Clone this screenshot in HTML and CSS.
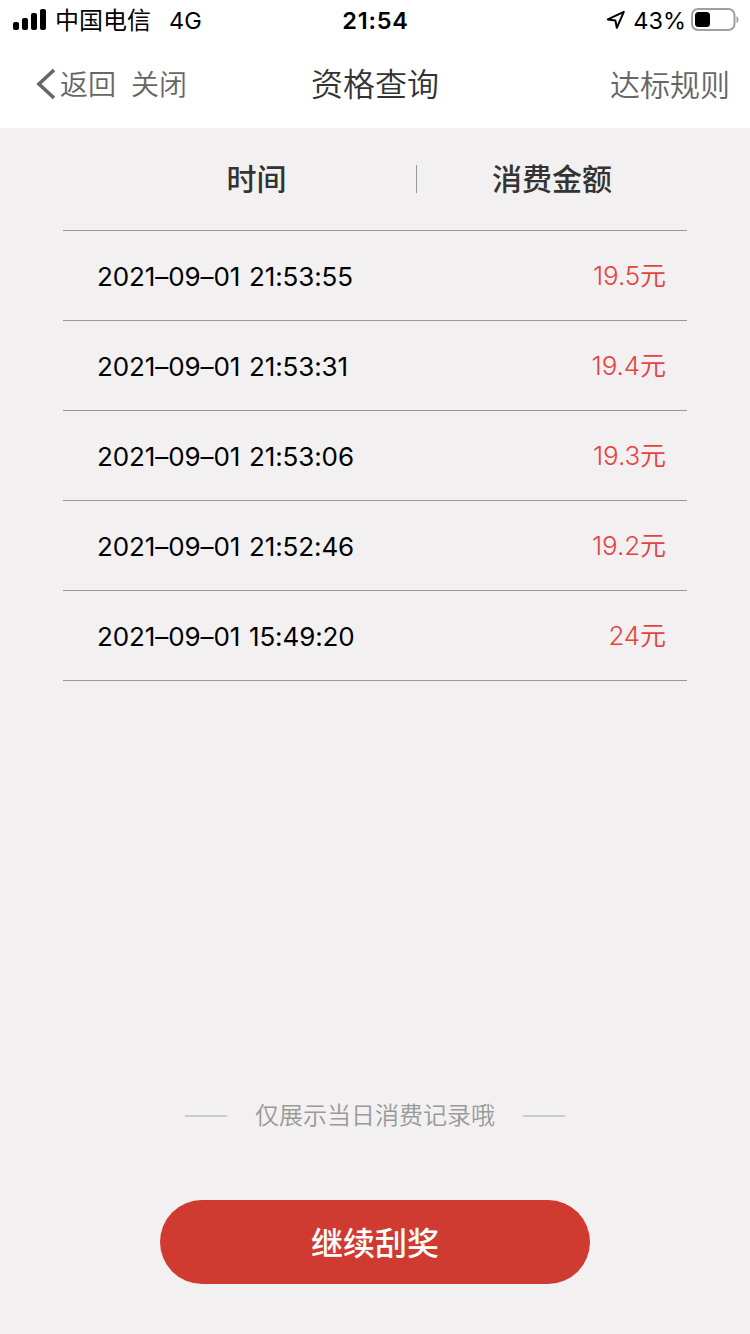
FILE: index.html
```
<!DOCTYPE html>
<html lang="zh-CN">
<head>
    <meta charset="UTF-8">
    <meta name="viewport" content="width=device-width, initial-scale=1.0">
    <title>资格查询</title>
    <link rel="stylesheet" href="styles.css">
</head>
<body>
    <header>
        <div class="status-bar">
            <div class="status-left">
                <svg class="signal" width="34" height="22" viewBox="0 0 34 22">
                    <rect x="0" y="13" width="6" height="8" rx="2"/>
                    <rect x="9" y="9" width="6" height="12" rx="2"/>
                    <rect x="18" y="4" width="6" height="17" rx="2"/>
                    <rect x="27" y="0" width="6" height="21" rx="2"/>
                </svg>
                <span class="carrier">中国电信</span>
                <span class="network">4G</span>
            </div>
            <div class="clock">21:54</div>
            <div class="status-right">
                <svg class="location" width="20" height="20" viewBox="0 0 20 20">
                    <path d="M17.8 1.8 L1.8 9.4 L9.4 10.4 L10.8 17.8 Z"/>
                </svg>
                <span class="percent">43%</span>
                <svg class="battery" width="49" height="24" viewBox="0 0 49 24">
                    <rect class="battery-case" x="1" y="1" width="42.5" height="21" rx="6"/>
                    <rect x="4" y="4" width="15" height="15" rx="3.5"/>
                    <path class="battery-tip" d="M45.5 8 Q47.5 9 47.5 11.5 Q47.5 14 45.5 15 Z"/>
                </svg>
            </div>
        </div>
        <nav class="nav-bar">
            <div class="nav-left">
                <svg class="back-icon" width="20" height="32" viewBox="0 0 20 32">
                    <path d="M18 2 L3 16 L18 30"/>
                </svg>
                <a class="back">返回</a>
                <a class="close">关闭</a>
            </div>
            <h1>资格查询</h1>
            <a class="rules">达标规则</a>
        </nav>
    </header>

    <main class="container">
        <div class="table-head">
            <div class="col-time">时间</div>
            <div class="col-amount">消费金额</div>
        </div>
        <ul class="record-list">
            <li><span class="time">2021–09–01 21:53:55</span><span class="amount">19.5元</span></li>
            <li><span class="time">2021–09–01 21:53:31</span><span class="amount">19.4元</span></li>
            <li><span class="time">2021–09–01 21:53:06</span><span class="amount">19.3元</span></li>
            <li><span class="time">2021–09–01 21:52:46</span><span class="amount">19.2元</span></li>
            <li><span class="time">2021–09–01 15:49:20</span><span class="amount">24元</span></li>
        </ul>
    </main>

    <footer>
        <p class="tip">仅展示当日消费记录哦</p>
        <button class="continue-button">继续刮奖</button>
    </footer>
</body>
</html>
```

FILE: styles.css
```
* {
    box-sizing: border-box;
}
body {
    display: flex;
    flex-direction: column;
    height: 1334px;
    margin: 0;
    background-color: #f2f0f1;
    color: #000;
    font-family: Inter, "Noto Sans CJK SC", sans-serif;
}
header {
    height: 128px;
    background-color: #fff;
}
.status-bar {
    display: grid;
    grid-template-columns: 1fr auto 1fr;
    align-items: center;
    height: 40px;
    padding: 0 10px 0 13px;
    font-size: 24px;
    line-height: 40px;
}
.status-left,
.status-right {
    display: flex;
    align-items: center;
}
.status-right {
    justify-content: flex-end;
}
.signal {
    margin-right: 8px;
}
.carrier {
    padding-top: 2px;
    line-height: 38px;
}
.network {
    margin-left: 18px;
    padding-top: 2px;
    font-size: 23.5px;
    line-height: 38px;
}
.clock {
    padding-top: 2px;
    margin-left: -2px;
    font-size: 23.5px;
    font-weight: 600;
    letter-spacing: 0.8px;
    line-height: 38px;
}
.location {
    margin-right: 7px;
    fill: none;
    stroke: #000;
    stroke-width: 2;
    stroke-linejoin: round;
}
.percent {
    margin-right: 5px;
    padding-top: 2px;
    font-size: 23.5px;
    line-height: 38px;
}
.battery-case {
    fill: none;
    stroke: #a0a0a0;
    stroke-width: 2;
}
.battery-tip {
    fill: #a0a0a0;
}
.nav-bar {
    display: grid;
    grid-template-columns: 1fr auto 1fr;
    align-items: center;
    height: 88px;
    padding: 0 20px;
    color: #666;
    font-size: 28px;
    font-weight: 350;
}
.nav-left {
    display: flex;
    align-items: center;
    padding-left: 16px;
}
.back,
.close {
    padding-bottom: 2px;
}
.back-icon {
    margin-right: 4px;
    fill: none;
    stroke: #666;
    stroke-width: 3.6;
}
.close {
    margin-left: 15px;
}
h1 {
    margin: 0;
    padding-bottom: 4px;
    color: #333;
    font-size: 32px;
    font-weight: 350;
}
.rules {
    padding-bottom: 3px;
    font-size: 30px;
    text-align: right;
}
.container {
    flex: 1;
    padding: 0 63px;
}
.table-head {
    display: flex;
    align-items: center;
    height: 103px;
    border-bottom: 1px solid #999;
    color: #333;
    font-size: 30px;
    font-weight: 500;
    line-height: 28px;
}
.col-time {
    width: 354px;
    padding-left: 34px;
    border-right: 1px solid #999;
    text-align: center;
}
.col-amount {
    flex: 1;
    text-align: center;
}
.record-list {
    margin: 0;
    padding: 0;
    list-style: none;
}
.record-list li {
    display: flex;
    justify-content: space-between;
    align-items: center;
    height: 90px;
    padding: 0 21px 0 34px;
    border-bottom: 1px solid #999;
    font-size: 26px;
}
.time {
    padding-top: 2px;
    letter-spacing: -0.1px;
    word-spacing: 1.5px;
}
.amount {
    padding-bottom: 4px;
    color: #e64340;
    font-weight: 350;
    letter-spacing: -0.1px;
}
footer {
    display: flex;
    flex-direction: column;
    align-items: center;
    padding-bottom: 50px;
}
.tip {
    display: flex;
    align-items: center;
    gap: 28px;
    margin: 0 0 66px;
    color: #999;
    font-size: 24px;
    font-weight: 350;
    line-height: 36px;
}
.tip::before,
.tip::after {
    content: "";
    width: 42px;
    height: 2px;
    background-color: #ccc;
}
.continue-button {
    width: 430px;
    height: 84px;
    padding: 0 0 3px;
    border: none;
    border-radius: 42px;
    background-color: #cf3a31;
    color: #fff;
    font-family: inherit;
    font-size: 32px;
    font-weight: 500;
}
```
